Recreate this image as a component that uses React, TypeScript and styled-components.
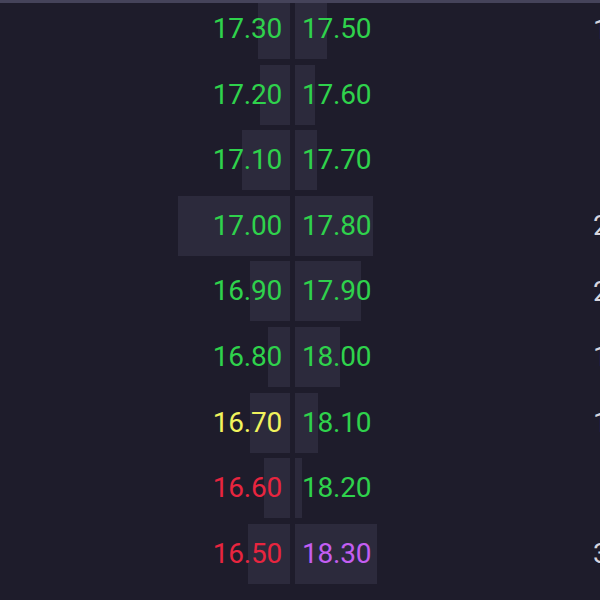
import React from "react";
import styled, { createGlobalStyle } from "styled-components";

const GlobalStyle = createGlobalStyle`
  html, body {
    margin: 0;
    padding: 0;
    background-color: #1e1c2b;
  }
`;

const Frame = styled.div`
  width: 600px;
  height: 600px;
  box-sizing: border-box;
  border-top: 3px solid #45435a;
  background-color: #1e1c2b;
  overflow: hidden;
  font-family: Roboto, "Liberation Sans", sans-serif;
`;

const Ladder = styled.div`
  display: flex;
  flex-direction: column;
  gap: 5.6px;
  margin-top: -4px;
`;

const Row = styled.div`
  display: flex;
  align-items: stretch;
  height: 60px;
  padding-left: 170px;
`;

const Cell = styled.div<{ $fill: number; $side: "bid" | "ask" }>`
  display: flex;
  flex-shrink: 0;
  align-items: center;
  box-sizing: border-box;
  background-image: linear-gradient(#2c2a3c, #2c2a3c);
  background-repeat: no-repeat;
  background-size: ${(p) => p.$fill}px 100%;
  background-position: ${(p) => (p.$side === "bid" ? "right" : "left")} center;
  width: ${(p) => (p.$side === "bid" ? 120 : 90)}px;
  justify-content: ${(p) => (p.$side === "bid" ? "flex-end" : "flex-start")};
  padding: ${(p) => (p.$side === "bid" ? "0 8px 0 0" : "0 0 0 7px")};
  margin-left: ${(p) => (p.$side === "ask" ? 5 : 0)}px;
`;

const Price = styled.span<{ $tone: string }>`
  font-size: 28px;
  line-height: 1;
  letter-spacing: -0.2px;
  color: ${(p) => p.$tone};
`;

const Volume = styled.span`
  display: flex;
  flex-shrink: 0;
  align-items: center;
  margin-left: 208px;
  font-size: 28px;
  color: #d6d5de;
  white-space: nowrap;
`;

const GREEN = "#2fd24c";
const RED = "#e8253f";
const YELLOW = "#f1f35c";
const PURPLE = "#c45ef2";

type Level = {
  bid: string;
  bidTone: string;
  bidFill: number;
  ask: string;
  askTone: string;
  askFill: number;
  volume: string;
};

const levels: Level[] = [
  { bid: "17.30", bidTone: GREEN, bidFill: 32, ask: "17.50", askTone: GREEN, askFill: 32, volume: "1 420" },
  { bid: "17.20", bidTone: GREEN, bidFill: 30, ask: "17.60", askTone: GREEN, askFill: 20, volume: "" },
  { bid: "17.10", bidTone: GREEN, bidFill: 48, ask: "17.70", askTone: GREEN, askFill: 22, volume: "" },
  { bid: "17.00", bidTone: GREEN, bidFill: 112, ask: "17.80", askTone: GREEN, askFill: 78, volume: "2 310" },
  { bid: "16.90", bidTone: GREEN, bidFill: 40, ask: "17.90", askTone: GREEN, askFill: 66, volume: "2 050" },
  { bid: "16.80", bidTone: GREEN, bidFill: 22, ask: "18.00", askTone: GREEN, askFill: 45, volume: "1 180" },
  { bid: "16.70", bidTone: YELLOW, bidFill: 40, ask: "18.10", askTone: GREEN, askFill: 23, volume: "1 090" },
  { bid: "16.60", bidTone: RED, bidFill: 26, ask: "18.20", askTone: GREEN, askFill: 7, volume: "" },
  { bid: "16.50", bidTone: RED, bidFill: 42, ask: "18.30", askTone: PURPLE, askFill: 82, volume: "3 270" },
];

export default function App() {
  return (
    <>
      <GlobalStyle />
      <Frame>
        <Ladder>
          {levels.map((level) => (
            <Row key={level.bid}>
              <Cell $side="bid" $fill={level.bidFill}>
                <Price $tone={level.bidTone}>{level.bid}</Price>
              </Cell>
              <Cell $side="ask" $fill={level.askFill}>
                <Price $tone={level.askTone}>{level.ask}</Price>
              </Cell>
              <Volume>{level.volume}</Volume>
            </Row>
          ))}
        </Ladder>
      </Frame>
    </>
  );
}
